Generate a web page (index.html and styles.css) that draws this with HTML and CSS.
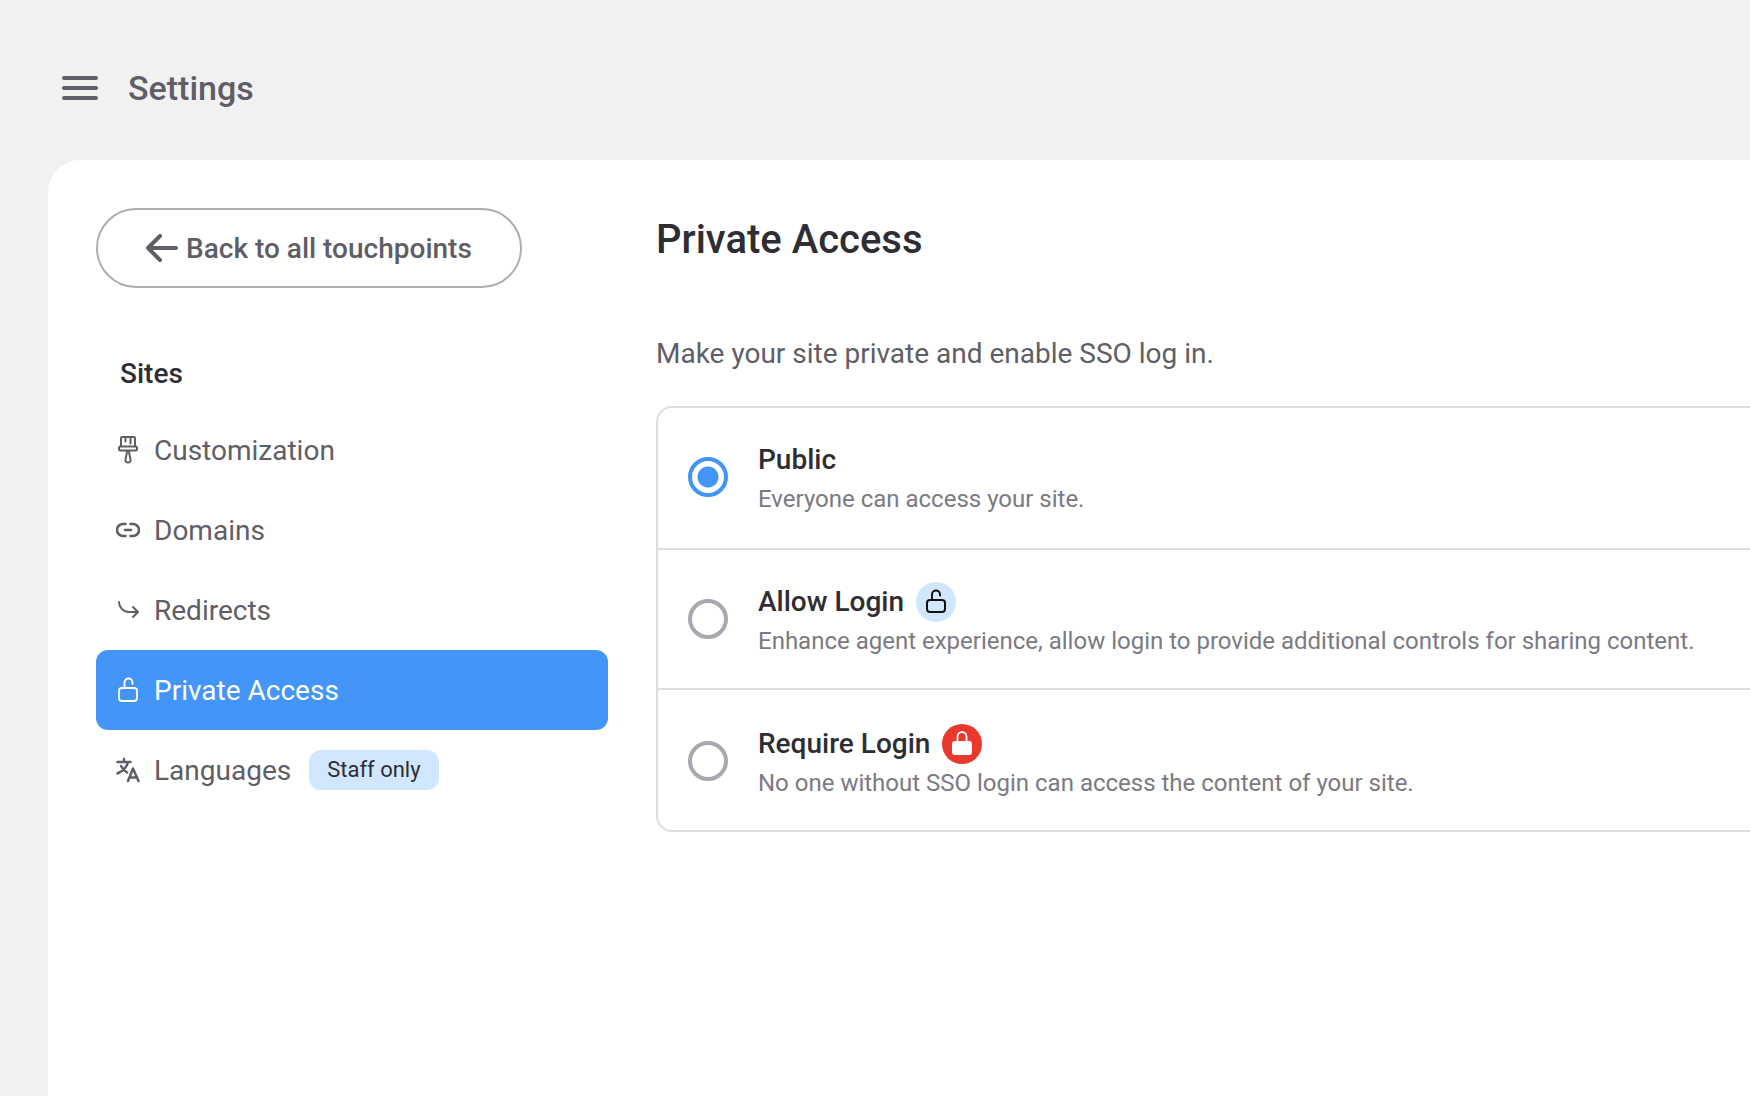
FILE: index.html
```html
<!DOCTYPE html>
<html lang="en">
<head>
  <meta charset="UTF-8">
  <meta name="viewport" content="width=device-width, initial-scale=1.0">
  <title>Settings - Private Access</title>
  <link rel="stylesheet" href="styles.css">
</head>
<body>
  <header class="topbar">
    <button type="button" class="menu-btn" aria-label="Menu">
      <svg width="36" height="24" viewBox="0 0 36 24" fill="none" stroke="currentColor" stroke-width="4" stroke-linecap="round">
        <path d="M2 2h32M2 12h32M2 22h32"/>
      </svg>
    </button>
    <h1 class="topbar-title">Settings</h1>
  </header>

  <div class="panel">
    <aside class="sidebar">
      <button type="button" class="back-btn">
        <svg width="32" height="28" viewBox="0 0 32 28" fill="none" stroke="currentColor" stroke-width="4" stroke-linecap="round" stroke-linejoin="round">
          <path d="M14 2L2 14l12 12M2 14h28"/>
        </svg>
        Back to all touchpoints
      </button>

      <h2 class="nav-title">Sites</h2>
      <nav class="nav">
        <a href="#" class="nav-link">
          <svg width="24" height="28" viewBox="0 0 24 28" fill="none" stroke="currentColor" stroke-width="2" stroke-linecap="round" stroke-linejoin="round">
            <path d="M5 10V2a1 1 0 0 1 1-1h12a1 1 0 0 1 1 1v8"/>
            <path d="M9.500 1.500v4M14.500 1.500v6"/>
            <rect x="3" y="10.500" width="18" height="4" rx="1.500"/>
            <path d="M11 15c0 4-1.500 6-1.500 9a2.500 2.500 0 0 0 5 0c0-3-1.500-5-1.500-9"/>
          </svg>
          Customization
        </a>
        <a href="#" class="nav-link">
          <svg width="24" height="28" viewBox="0 0 24 28" fill="none" stroke="currentColor" stroke-width="2.500" stroke-linecap="round">
            <path d="M9.500 8H7a6 6 0 0 0 0 12h2.500M14.500 8H17a6 6 0 0 1 0 12h-2.500M9 14h6"/>
          </svg>
          Domains
        </a>
        <a href="#" class="nav-link">
          <svg width="24" height="28" viewBox="0 0 24 28" fill="none" stroke="currentColor" stroke-width="2" stroke-linecap="round" stroke-linejoin="round">
            <path d="M3 6c0 5 4 10 10 10h9M17 11l5 5-5 5"/>
          </svg>
          Redirects
        </a>
        <a href="#" class="nav-link active">
          <svg width="24" height="28" viewBox="0 0 24 28" fill="none" stroke="currentColor" stroke-width="1.800" stroke-linecap="round">
            <rect x="3" y="12" width="18" height="13" rx="3"/>
            <path d="M8.500 12V6.500a4 4 0 0 1 8 0V8"/>
          </svg>
          Private Access
        </a>
        <a href="#" class="nav-link">
          <svg width="24" height="28" viewBox="0 0 24 28" fill="none" stroke="currentColor" stroke-width="2.500" stroke-linecap="round" stroke-linejoin="round">
            <path d="M1.500 6h13M8 3v3M12 6c-1 5-5 9-10.500 11.500M5 10c1.500 3 3.500 5 6 6.500M12 25l5-12.500L22.500 25M14 21.500h7"/>
          </svg>
          Languages
          <span class="tag">Staff only</span>
        </a>
      </nav>
    </aside>

    <main class="content">
      <h2 class="content-title">Private Access</h2>
      <p class="content-intro">Make your site private and enable SSO log in.</p>

      <div class="options" role="radiogroup" aria-label="Private Access">
        <label class="option" for="access-public">
          <input type="radio" class="radio" id="access-public" name="access" checked>
          <span class="option-text">
            <span class="option-title">Public</span>
            <span class="option-desc">Everyone can access your site.</span>
          </span>
        </label>
        <label class="option" for="access-allow">
          <input type="radio" class="radio" id="access-allow" name="access">
          <span class="option-text">
            <span class="option-title">Allow Login
              <span class="lock-badge lock-badge-open">
                <svg width="24" height="28" viewBox="0 0 24 28" fill="none" stroke="currentColor" stroke-width="2" stroke-linecap="round">
                  <rect x="3" y="12" width="18" height="12" rx="3"/>
                  <path d="M8 12V6.500a4 4 0 0 1 8 0v1"/>
                </svg>
              </span>
            </span>
            <span class="option-desc">Enhance agent experience, allow login to provide additional controls for sharing content.</span>
          </span>
        </label>
        <label class="option" for="access-require">
          <input type="radio" class="radio" id="access-require" name="access">
          <span class="option-text">
            <span class="option-title">Require Login
              <span class="lock-badge lock-badge-closed">
                <svg width="24" height="28" viewBox="0 0 24 28" fill="none" stroke="currentColor" stroke-width="1.800">
                  <rect x="2" y="11" width="20" height="14" rx="3" fill="currentColor" stroke="none"/>
                  <path d="M7.500 12V6.500a4.500 4.500 0 0 1 9 0V12"/>
                </svg>
              </span>
            </span>
            <span class="option-desc">No one without SSO login can access the content of your site.</span>
          </span>
        </label>
      </div>
    </main>
  </div>
</body>
</html>
```
FILE: styles.css
```css
* {
  box-sizing: border-box;
}
body {
  margin: 0;
  min-height: 100vh;
  display: flex;
  flex-direction: column;
  font-family: Roboto, sans-serif;
  font-size: 28px;
  color: #5f5e66;
  background-color: #f1f1f1;
}
h1, h2, p {
  margin: 0;
}
svg {
  flex-shrink: 0;
}
button {
  font: inherit;
  color: inherit;
  cursor: pointer;
}

/* top bar */
.topbar {
  display: flex;
  align-items: center;
  gap: 30px;
  padding: 68px 62px 52px;
}
.menu-btn {
  display: flex;
  padding: 0;
  border: none;
  background: none;
}
.topbar-title {
  font-size: 34px;
  font-weight: 500;
  line-height: 40px;
}

/* white panel */
.panel {
  flex: 1;
  display: flex;
  gap: 48px;
  margin-left: 48px;
  padding: 48px 0 48px 48px;
  background-color: #fff;
  border-top-left-radius: 32px;
}

/* sidebar */
.sidebar {
  width: 512px;
  flex-shrink: 0;
}
.back-btn {
  display: flex;
  align-items: center;
  gap: 8px;
  height: 80px;
  padding: 0 48px;
  border: 2px solid #aeaeae;
  border-radius: 40px;
  background-color: #fff;
  font-size: 28px;
  font-weight: 500;
}
.nav-title {
  padding: 65px 24px 15px;
  font-size: 28px;
  font-weight: 500;
  line-height: 42px;
  color: #2e2d33;
}
.nav-link {
  display: flex;
  align-items: center;
  gap: 14px;
  height: 80px;
  padding: 0 20px;
  border-radius: 12px;
  color: #5f5e66;
  text-decoration: none;
}
.nav-link.active {
  background-color: #4395f8;
  color: #fff;
}
.tag {
  margin-left: 4px;
  padding: 0 18px;
  border-radius: 12px;
  background-color: #d1e7fd;
  color: #2e2d33;
  font-size: 22px;
  line-height: 40px;
}

/* content */
.content {
  flex: 1;
  min-width: 0;
}
.content-title {
  padding: 6px 0;
  font-size: 40px;
  font-weight: 500;
  line-height: 52px;
  color: #2e2d33;
}
.content-intro {
  padding: 61px 0 31px;
  line-height: 42px;
}
.options {
  border: 2px solid #dedde3;
  border-right: none;
  border-radius: 16px 0 0 16px;
}
.option {
  display: flex;
  align-items: center;
  gap: 30px;
  padding: 32px 30px 30px;
  cursor: pointer;
}
.option + .option {
  padding-bottom: 28px;
  border-top: 2px solid #dedde3;
}
.option:last-child {
  padding-top: 34px;
}
.radio {
  appearance: none;
  flex-shrink: 0;
  width: 40px;
  height: 40px;
  margin: 0 0 4px;
  border: 4px solid #a8a8b0;
  border-radius: 50%;
  background-color: #fff;
}
.radio:checked {
  border-color: #4395f8;
  background-image: radial-gradient(circle, #4395f8 10px, transparent 11px);
}
.option-text {
  display: flex;
  flex-direction: column;
}
.option-title {
  display: flex;
  align-items: center;
  gap: 12px;
  font-weight: 500;
  line-height: 40px;
  color: #2e2d33;
}
.option-desc {
  font-size: 24px;
  line-height: 38px;
  color: #7b7a83;
}
.lock-badge {
  display: flex;
  align-items: center;
  justify-content: center;
  width: 40px;
  height: 40px;
  border-radius: 50%;
}
.lock-badge-open {
  background-color: #d1e7fd;
  color: #111;
}
.lock-badge-closed {
  background-color: #ea382d;
  color: #fff;
}
```
